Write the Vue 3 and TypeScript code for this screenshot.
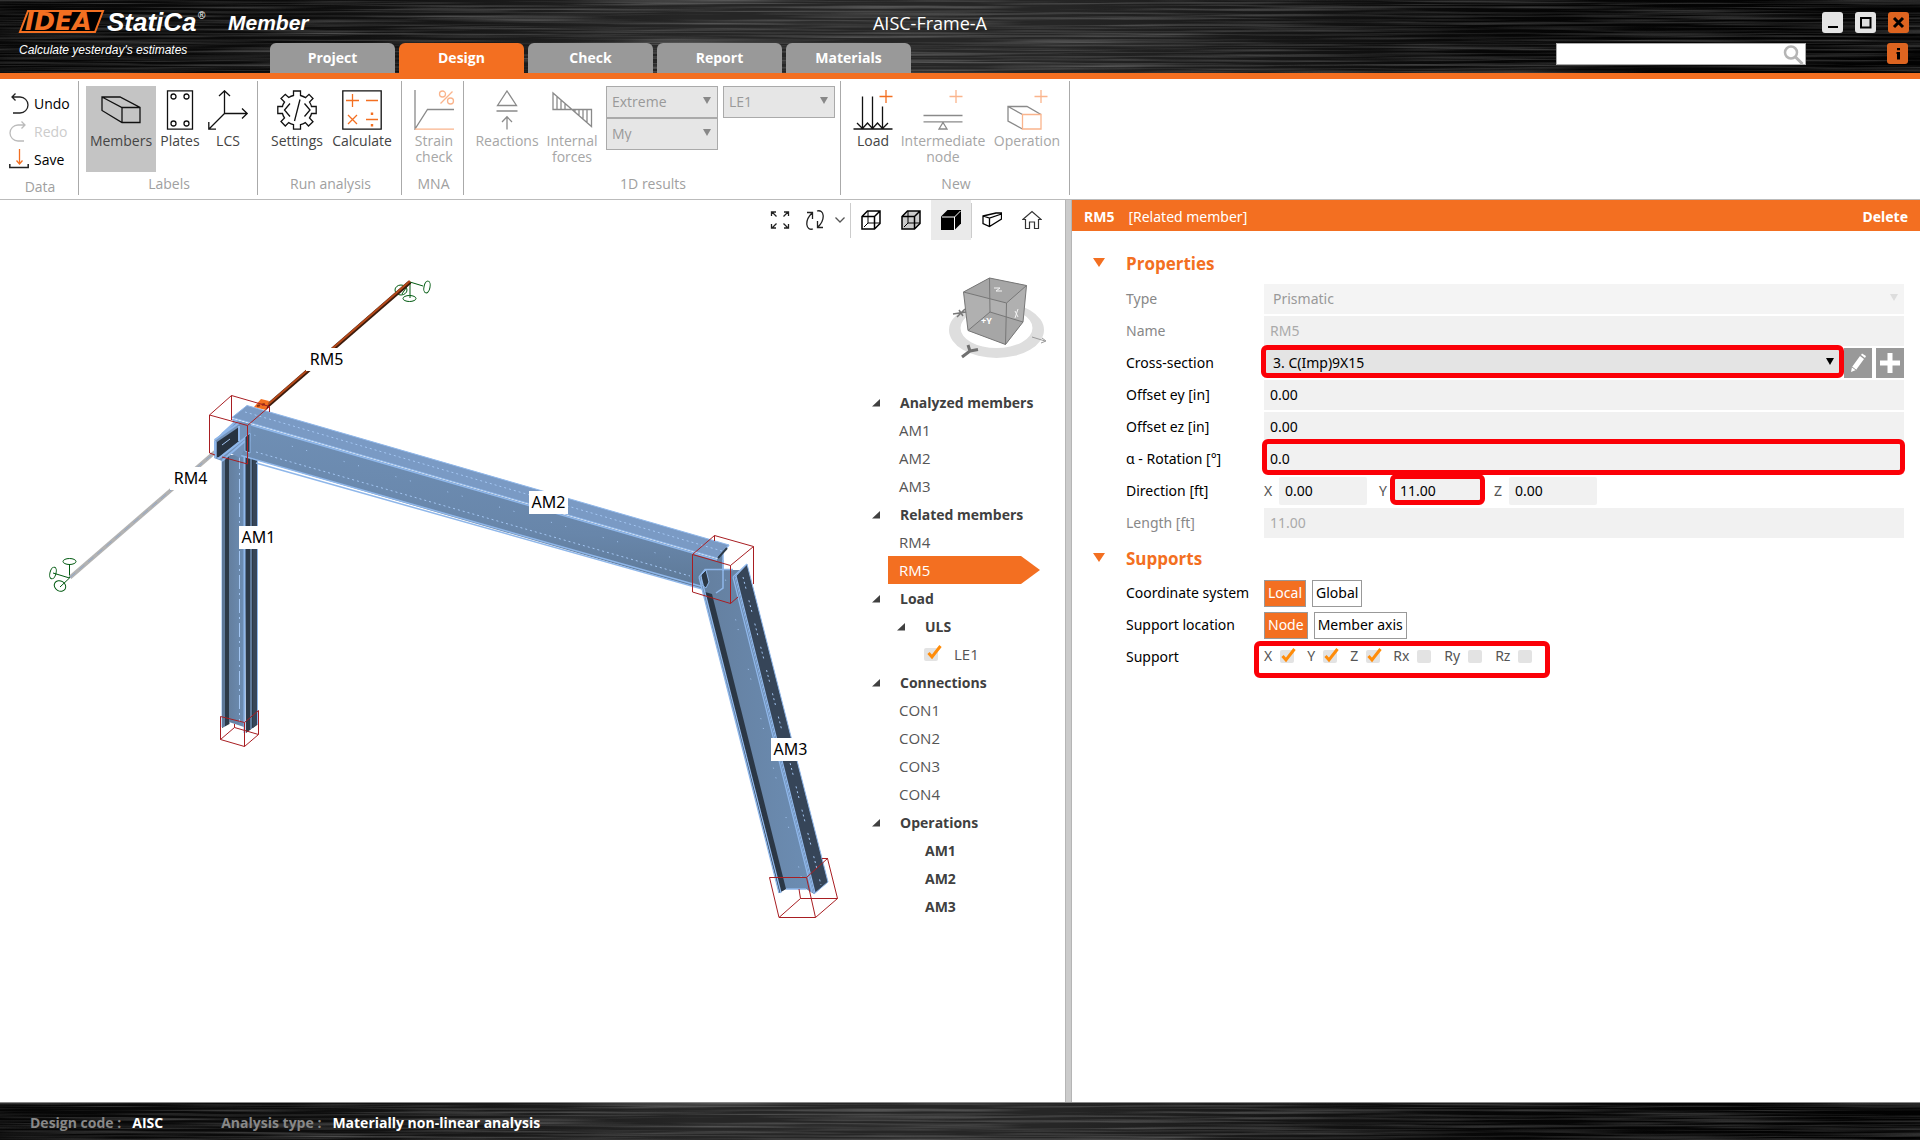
<script setup lang="ts">
import { ref } from 'vue'

interface Stroke { d: string; c?: string; f?: string; w?: number }
interface Tool { label: string; width: number; icon: Stroke[]; active?: boolean; disabled?: boolean }

const O = '#f36f21'
const OL = '#fab48c'
const G = '#8a8a8a'

const tabs = ['Project', 'Design', 'Check', 'Report', 'Materials']
const activeTab = ref('Design')

const labelTools: Tool[] = [
  { label: 'Members', width: 70, active: true, icon: [{ d: 'M1 7H19L39 17.5V32.5H21L1 20.5ZM1 7L21 17.5H39M21 17.5V32.5' }] },
  { label: 'Plates', width: 48, icon: [
    { d: 'M7.5 .8H32.5V39.2H7.5Z' },
    { d: 'M11 6.5a2.5 2.5 0 1 0 5 0a2.5 2.5 0 1 0-5 0M24 6.5a2.5 2.5 0 1 0 5 0a2.5 2.5 0 1 0-5 0M11 33.5a2.5 2.5 0 1 0 5 0a2.5 2.5 0 1 0-5 0M24 33.5a2.5 2.5 0 1 0 5 0a2.5 2.5 0 1 0-5 0' },
  ] },
  { label: 'LCS', width: 48, icon: [{ d: 'M16.5 23.5V1M11 6L16.5 .8L22 6M16.5 23.5H39M34 18.5L39.2 23.5L34 28.5M16.5 23.5L1 39M.8 32V39.2H8' }] },
]
const runTools: Tool[] = [
  { label: 'Settings', width: 66, icon: [
    { d: 'M16.5 1H23.5V5.5Q26.500 6.300 28.500 7.600L32 4.300L36 8.500L32.500 12Q34 14.500 34.500 16.500H39.200V23.500H34.500Q34 26 32.500 28L36 31.700L31.500 36L28.300 32.600Q26 34 23.500 34.600V39.200H16.500V34.600Q14 34 11.700 32.600L8.300 36L4 31.500L7.500 28Q6 26 5.500 23.500H.8V16.500H5.500Q6 14 7.500 12L4 8.500L8.300 4.300L11.700 7.500Q14 6 16.500 5.500Z' },
    { d: 'M13 13.500L7.500 20L13 26.500M27.500 13.500L33 20L27.500 26.500M23 9.500L17.500 31' },
  ] },
  { label: 'Calculate', width: 64, icon: [
    { d: 'M.8 .8H39.200V39.200H.8Z' },
    { d: 'M4 10.500H17M10.500 4V17M24 10.500H36M6 25L15 34M15 25L6 34M24 29.500H36', c: O },
    { d: 'M28.800 22.500H31.200V25H28.800ZM28.800 34H31.200V36.500H28.800Z', c: 'none', f: O },
  ] },
]
const mnaTools: Tool[] = [
  { label: 'Strain check', width: 48, disabled: true, icon: [
    { d: 'M1 0V39L13.500 19.500H40', c: G },
    { d: 'M1 39.200H40M38.500 1.500L26.500 13.500M25.500 4a3 3 0 1 0 6 0a3 3 0 1 0-6 0M33.500 11a3 3 0 1 0 6 0a3 3 0 1 0-6 0', c: OL },
  ] },
]
const resultTools: Tool[] = [
  { label: 'Reactions', width: 70, disabled: true, icon: [{ d: 'M20 1L29.500 15.500H10.500ZM9.500 21H30.500M20 39.500V27M15 32L20 26.800L25 32', c: G }] },
  { label: 'Internal forces', width: 60, disabled: true, icon: [{ d: 'M1 3V19.500H39.500V36.500ZM5 7V19.500M9 10.500V19.500M13 14V19.500M27 19.500V25.500M31 19.500V29M35 19.500V32.500M23 19.500V22', c: G }] },
]
const newTools: Tool[] = [
  { label: 'Load', width: 48, icon: [
    { d: 'M.5 39H39.500M9.500 6.500V38.500M19.500 6.500V38.500M29.500 16.500V38.500M4 33L9.500 38.500L14.500 33L19.500 38.500L24.500 33L29.500 38.500L35 33' },
    { d: 'M33 0V13M26.500 6.500H39.500', c: O },
  ] },
  { label: 'Intermediate node', width: 92, disabled: true, icon: [
    { d: 'M.5 25.500H39.500M.5 31.800H39.500M20 32.500L24 39H16Z', c: G },
    { d: 'M33 0V13M26.500 6.500H39.500', c: OL },
  ] },
  { label: 'Operation', width: 76, disabled: true, icon: [
    { d: 'M15.500 39L1 31V16.500H20L34 24.500M1 16.500L15.500 24.500', c: G },
    { d: 'M15.500 24.500H34V39H15.500ZM34 0V13M27.500 6.500H40.500', c: OL },
  ] },
]

interface Row { text: string; level: number; bold?: boolean; arrow?: boolean; check?: boolean; selected?: boolean }
const tree: Row[] = [
  { text: 'Analyzed members', level: 0, bold: true, arrow: true },
  { text: 'AM1', level: 0 },
  { text: 'AM2', level: 0 },
  { text: 'AM3', level: 0 },
  { text: 'Related members', level: 0, bold: true, arrow: true },
  { text: 'RM4', level: 0 },
  { text: 'RM5', level: 0, selected: true },
  { text: 'Load', level: 0, bold: true, arrow: true },
  { text: 'ULS', level: 1, bold: true, arrow: true },
  { text: 'LE1', level: 1, check: true },
  { text: 'Connections', level: 0, bold: true, arrow: true },
  { text: 'CON1', level: 0 },
  { text: 'CON2', level: 0 },
  { text: 'CON3', level: 0 },
  { text: 'CON4', level: 0 },
  { text: 'Operations', level: 0, bold: true, arrow: true },
  { text: 'AM1', level: 1, bold: true },
  { text: 'AM2', level: 1, bold: true },
  { text: 'AM3', level: 1, bold: true },
]

const form = ref({ name: 'RM5', ey: '0.00', ez: '0.00', alpha: '0.0', length: '11.00' })
const direction = ref([
  { axis: 'X', value: '0.00', marked: false },
  { axis: 'Y', value: '11.00', marked: true },
  { axis: 'Z', value: '0.00', marked: false },
])
const supports = ref([
  { axis: 'X', on: true },
  { axis: 'Y', on: true },
  { axis: 'Z', on: true },
  { axis: 'Rx', on: false },
  { axis: 'Ry', on: false },
  { axis: 'Rz', on: false },
])
const loadOn = ref(true)
const search = ref('')

const toolGroups: { caption: string; cls: string; tools: Tool[] }[] = [
  { caption: 'Labels', cls: 'g-labels', tools: labelTools },
  { caption: 'Run analysis', cls: 'g-run', tools: runTools },
  { caption: 'MNA', cls: 'g-mna', tools: mnaTools },
  { caption: '1D results', cls: 'g-results', tools: resultTools },
  { caption: 'New', cls: 'g-new', tools: newTools },
]

const memberLabels = [
  { t: 'RM5', x: 306, y: 348, w: 41 },
  { t: 'RM4', x: 170, y: 467, w: 41 },
  { t: 'AM1', x: 239, y: 526, w: 39 },
  { t: 'AM2', x: 529, y: 491, w: 39 },
  { t: 'AM3', x: 771, y: 738, w: 39 },
]
</script>

<template>
  <div class="app">
    <header class="top metal">
      <svg class="grain" aria-hidden="true">
        <filter id="brushed" x="0" y="0" width="100%" height="100%">
          <feTurbulence type="fractalNoise" baseFrequency="0.005 0.45" numOctaves="3" seed="4" />
          <feColorMatrix values="0 0 0 0 1  0 0 0 0 1  0 0 0 0 1  0.500 0 0 0 -0.200" />
        </filter>
        <rect width="100%" height="100%" filter="url(#brushed)" />
      </svg>
      <div class="brand">
        <svg class="logo" width="224" height="60" viewBox="0 0 224 60" role="img" aria-label="IDEA StatiCa">
          <path d="M28 11H103L95 32H20Z" fill="#000" stroke="#f36f21" stroke-width="2" />
          <text class="logo-idea" x="25" y="30">IDEA</text>
          <text class="logo-name" x="107" y="31">StatiCa</text>
          <text class="logo-reg" x="198" y="19">®</text>
          <text class="logo-tag" x="19" y="54">Calculate yesterday's estimates</text>
        </svg>
      </div>
      <div class="middle">
        <div class="title-row">
          <span class="product">Member</span>
          <h1>AISC-Frame-A</h1>
        </div>
        <nav class="tabs">
          <button v-for="t in tabs" :key="t" :class="{ on: t === activeTab }" @click="activeTab = t">{{ t }}</button>
        </nav>
      </div>
      <div class="right">
        <div class="win">
          <button aria-label="Minimize"><svg width="21" height="21"><path d="M6 15H16" stroke="#000" stroke-width="2" /></svg></button>
          <button aria-label="Maximize"><svg width="21" height="21"><path d="M6 6H15.500V15.500H6Z" stroke="#000" stroke-width="2" fill="#ddd" /></svg></button>
          <button class="close" aria-label="Close"><svg width="21" height="21"><path d="M6 6L15 15M15 6L6 15" stroke="#000" stroke-width="3" /></svg></button>
        </div>
        <div class="find">
          <label class="search">
            <input v-model="search" type="text" aria-label="Search" />
            <svg width="22" height="22"><circle cx="8" cy="8.500" r="6" fill="none" stroke="#b5b5b5" stroke-width="2.500" /><path d="M12.500 13L19.500 20" stroke="#b5b5b5" stroke-width="3" /></svg>
          </label>
          <button class="info" aria-label="Information"><svg width="21" height="21"><path d="M10 5H13V7.200H10ZM9.500 9H13V16.500H10V11H9.500Z" fill="#000" /></svg></button>
        </div>
      </div>
    </header>

    <div class="ribbon">
      <section class="group g-data">
        <div class="quick">
          <button><svg width="20" height="22" fill="none" stroke="#222" stroke-width="1.300"><path d="M3 4H11a8 8 0 0 1 0 16H4M6.500 .5L3 4L6.500 7.500" /></svg>Undo</button>
          <button disabled><svg width="20" height="22" fill="none" stroke="#bbb" stroke-width="1.300"><path d="M16 4H9a8 8 0 0 0 0 16H15M12.500 .5L16 4L12.500 7.500" /></svg>Redo</button>
          <button><svg width="20" height="22" fill="none"><path d="M10.500 0V15M7.500 11.500L10.500 15L13.500 11.500" stroke="#f36f21" stroke-width="1.300" /><path d="M.8 15V18.500H19.200V15" stroke="#222" stroke-width="1.500" /></svg>Save</button>
        </div>
        <h2>Data</h2>
      </section>
      <section v-for="g in toolGroups" :key="g.caption" class="group" :class="g.cls">
        <div class="tools">
          <button v-for="t in g.tools" :key="t.label" class="tool" :class="{ active: t.active }" :disabled="t.disabled" :style="{ width: t.width + 'px' }">
            <svg width="42" height="40" viewBox="-1 0 42 40" fill="none" stroke-width="1.300">
              <path v-for="(s, i) in t.icon" :key="i" :d="s.d" :stroke="s.c || '#111'" :fill="s.f || 'none'" />
            </svg>
            <span>{{ t.label }}</span>
          </button>
          <div v-if="g.cls === 'g-results'" class="combos">
            <div class="combo"><select disabled aria-label="Extreme"><option>Extreme</option></select><i /></div>
            <div class="combo"><select disabled aria-label="Load effect"><option>LE1</option></select><i /></div>
            <div class="combo"><select disabled aria-label="Component"><option>My</option></select><i /></div>
          </div>
        </div>
        <h2>{{ g.caption }}</h2>
      </section>
    </div>

    <main class="work">
      <section class="viewport">
        <svg class="scene" viewBox="0 200 1065 902" preserveAspectRatio="xMinYMin meet">
          <defs>
            <linearGradient id="web" x1="0" y1="0" x2="-0.080" y2="1"><stop offset="0" stop-color="#6f8fb5" /><stop offset=".6" stop-color="#6886aa" /><stop offset="1" stop-color="#5a7490" /></linearGradient>
            <linearGradient id="col" x1="0" x2="1"><stop offset="0" stop-color="#647f9f" /><stop offset="1" stop-color="#6c8db3" /></linearGradient>
          </defs>

          <g fill="none" stroke="#005a10">
            <path d="M410 282V298M410 282L423 286M410 282L402 294" />
            <ellipse cx="409.500" cy="298.500" rx="6.500" ry="3" /><ellipse cx="427" cy="287" rx="3" ry="6" transform="rotate(12 427 287)" /><ellipse cx="401" cy="290" rx="6" ry="5" />
            <path d="M69.500 578V564M69.500 578L53 573M69.500 578L60 587" />
            <ellipse cx="69.500" cy="561.500" rx="6.500" ry="3" /><ellipse cx="53" cy="573" rx="3" ry="6" transform="rotate(15 53 573)" /><ellipse cx="60" cy="586" rx="6" ry="5" transform="rotate(30 60 586)" />
          </g>
          <path d="M70 577.500L215 452" stroke="#b3b3b3" stroke-width="4" />
          <path d="M70 577.500L215 452" stroke="#8fa6c8" stroke-dasharray="7 5" />
          <path d="M265 408L410 282" stroke="#3c1b0c" stroke-width="4" />
          <path d="M265 407L410 281" stroke="#b5491a" stroke-width="2" />

          <path d="M222 455H229.500V724L222 728ZM244 455H258V724L246 733Z" fill="#2d3a48" />
          <path d="M229 455H244V727L229 722Z" fill="url(#col)" />
          <path d="M253 455H257V725L253 728Z" fill="#364558" />
          <path d="M222 455V727M224 455V727" stroke="#8fb7ea" />
          <path d="M244.500 430V733" stroke="#8fb7ea" stroke-width="2" />
          <path d="M251 455V729M257.500 460V724" stroke="#8fb7ea" />
          <path d="M239.500 455V722" stroke="#a3c6f3" stroke-dasharray="14 4 2 4" />

          <path d="M233 419L717 559L723 552V588L716 593L232 453Z" fill="url(#web)" />
          <path d="M247 405.500L232 417.500L717 558L729 545Z" fill="#7a9ac4" stroke="#8fb7ea" />
          <path d="M232 419.500L717 560M232 453L716 590.500M256 463L716 593L723 588V552M717 558L729 545" fill="none" stroke="#8fb7ea" stroke-width="1.500" />
          <path d="M245 412L722 551M256 452L690 576" stroke="#a3c6f3" stroke-dasharray="2 3" />
          <path d="M240 431L690 563" stroke="#a3c6f3" stroke-dasharray="1 14 1 38" />
          <path d="M718 558L727 548" stroke="#2d3a48" stroke-width="2" />

          <path d="M222 433L238 421L251 424V441L246 446L240 458L230 453L222 461L214 458V441Z" fill="#7393bb" />
          <path d="M217 442L239 427V441L219 457H217Z" fill="#27323f" />
          <path d="M214.500 440L239 423M215 441V458M218 459L250 434M222 461L245 441M222 434L236 421M239 426V441" stroke="#8fb7ea" stroke-width="2" fill="none" />
          <path d="M222 445L230 439" stroke="#a3c6f3" />
          <path d="M245 437L250 433V453L245 451Z" fill="#2d3a48" stroke="#8fb7ea" />
          <path d="M254 407L261 399L269 401L266 410Z" fill="#f36f21" /><path d="M257 406L265 404" stroke="#8a3410" stroke-width="2" stroke-dasharray="3 2" />

          <path d="M699 577L705 570L740 570L814 894L806 889H786L779 893Z" fill="url(#col)" />
          <path d="M705 592L712 594L786 889L779 893Z" fill="#2b3745" />
          <path d="M701 575L706 570L709 582L706 588L702 585Z" fill="#2b3745" stroke="#8fb7ea" />
          <path d="M735 577L747 564L828 882L814 894Z" fill="#364558" stroke="#8fb7ea" />
          <path d="M733 577L812 892M736 576L815 893M699 577L779 893M701 577L781 893M699 577L705 569.500H733M786 889H806M733 577L747 564" stroke="#8fb7ea" stroke-width="1.300" fill="none" />
          <path d="M743 577L821 885" stroke="#a3c6f3" stroke-dasharray="2 3 2 3 2 12" />
          <path d="M723 570L803 884" stroke="#a3c6f3" stroke-dasharray="1 9 1 40" />
          <path d="M723 560V588L716 593" stroke="#8fb7ea" stroke-width="1.500" fill="none" />

          <g fill="none" stroke="#a81e22">
            <path d="M209.500 415L231.500 395.500L269.500 406.500L247.500 425.500ZM209.500 415V453L215 455M247.500 425.500V464L222 457M231.500 395.500V420M269.500 406.500V412" />
            <path d="M220.500 716.500L244.500 722.500L258.500 710.500V734.500L244.500 746.500L220.500 739.500ZM244.500 722.500V746.500M220.500 739.500L234.500 727.500L258.500 734.500M234.500 724V727.500" />
            <path d="M692.500 554.500L714.500 535.500L753.500 546.500L730.500 565.500ZM692.500 554.500V592L730.500 603.500V565.500M753.500 546.500V584M730.500 603.500L738 597M714.500 535.500V541" />
            <path d="M769.500 877.500H806.500L827.500 858.500L837.500 898.500L815.500 917.500H779ZM806.500 877.500L815.500 917.500M779 917.500L800.500 898.500H837.500M800.500 898.500L799 889M822 858.500H828" />
          </g>

          <g class="labels">
            <g v-for="l in memberLabels" :key="l.t">
              <rect :x="l.x" :y="l.y" :width="l.w" height="23" fill="#fff" />
              <text :x="l.x + l.w / 2" :y="l.y + 17" text-anchor="middle">{{ l.t }}</text>
            </g>
          </g>

          <g class="cube">
            <path fill-rule="evenodd" fill="#dedede" d="M949 330a47.500 28 0 1 0 95 0a47.500 28 0 1 0-95 0M960.500 328a36 20 0 1 0 72 0a36 20 0 1 0-72 0" />
            <path d="M963.500 292L989.500 278L1026.500 285.500L1023 322L1005.500 344.500L968 330.500Z" fill="#b0b0b0" />
            <path d="M963.500 292L989.500 278L1026.500 285.500L1006.500 303ZM968 330.500L1005.500 344.500L1023 322L990 312Z" fill="#a6a6a6" />
            <path d="M963.500 292L989.500 278L1026.500 285.500L1023 322L1005.500 344.500L968 330.500ZM963.500 292L1006.500 303L1026.500 285.500M1006.500 303L1005.500 344.500M989.500 278L990 312L968 330.500M990 312L1023 322" fill="none" stroke="#777" />
            <path d="M1032 337L1045 341M1042 338L1046 341L1041 343" fill="none" stroke="#999" />
            <path d="M953 314L966 312M957 317L965 309M959 310L963 316" stroke="#777" stroke-width="1.500" />
            <path d="M962 357L970 351M968 345L970 351L978 349.500" fill="none" stroke="#707070" stroke-width="3" />
            <path d="M994 288H1000L996 291H1002M1015 311L1018 317M1018 309L1015 318" fill="none" stroke="#f4f4f4" />
            <text x="981" y="324">+Y</text>
          </g>
        </svg>

        <div class="viewbar">
          <button aria-label="Zoom all"><svg width="20" height="20" fill="none" stroke="#222" stroke-width="1.300"><path d="M1.500 6V2H6M2 2L6.500 6.500M14 2H18.500V6M18 2L13.500 6.500M1.500 14V18H6M2 18L6.500 13.500M14 18H18.500V14M18 18L13.500 13.500" /></svg></button>
          <button class="narrow" aria-label="Rotate"><svg width="22" height="20" fill="none" stroke="#222" stroke-width="1.300"><path d="M9 19C2 21 0 11 8 3M3 2.500H8.500V9M13 1C20 -1 22 9 14 17M13.500 11V17.500H19" /></svg></button>
          <button class="slim" aria-label="Rotate options"><svg width="10" height="6" fill="none" stroke="#555" stroke-width="1.300"><path d="M.5 .5L5 5L9.500 .5" /></svg></button>
          <span class="sep" />
          <button aria-label="Wireframe"><svg width="20" height="20" fill="none" stroke="#000" stroke-width="1.500"><path d="M1 6.500L6.500 1H19V13.500L13.500 19H1ZM1 6.500H13.500V19M13.500 6.500L19 1" /><path d="M7 1V13H19M7 13L3 17" stroke-width="1" /></svg></button>
          <button aria-label="Shaded"><svg width="20" height="20" fill="#ccc" stroke="#000" stroke-width="1.500"><path d="M1 6.500L6.500 1H19V13.500L13.500 19H1ZM1 6.500H13.500V19M13.500 6.500L19 1" /><path d="M7 1V13H19M7 13L3 17" stroke-width="1" fill="none" /></svg></button>
          <button class="on" aria-label="Solid"><svg width="20" height="20"><path d="M0 6.500L6.500 0H20V13.500L13.500 20H0Z" fill="#000" /><path d="M1 7H13.500V20M13.500 7L19.500 1" fill="none" stroke="#fff" /></svg></button>
          <span class="sep" />
          <button aria-label="Section view"><svg width="20" height="16" fill="none" stroke="#000" stroke-width="1.300"><path d="M1 4L14 1H19.500V7L7.500 14.500L1 11.500ZM1 4L7.500 6L19.500 2M7.500 6V14.500" /></svg></button>
          <button aria-label="Home view"><svg width="20" height="20" fill="none" stroke="#333" stroke-width="1.200"><path d="M.8 9.500L10 1.500L19.200 9.500H16.500V18.500H12.500V12H7.500V18.500H3.500V9.500Z" /></svg></button>
        </div>

        <ul class="tree">
          <li v-for="(r, i) in tree" :key="i" :class="{ bold: r.bold, sel: r.selected, child: r.level === 1 }">
            <span class="twist"><svg v-if="r.arrow" width="8" height="8"><path d="M8 0V7.500H0Z" fill="#404040" /></svg></span>
            <label v-if="r.check" class="tick"><input v-model="loadOn" type="checkbox" /><svg viewBox="0 0 18 16" width="18" height="16"><path d="M3.500 9L7 13L15.500 2" fill="none" stroke="#ff8c0a" stroke-width="3" /></svg><span class="tick-text">{{ r.text }}</span></label>
            <span v-else>{{ r.text }}</span>
          </li>
        </ul>
      </section>

      <div class="splitter" />

      <aside class="panel">
        <div class="panel-head">
          <strong>RM5</strong><span>[Related member]</span><button>Delete</button>
        </div>
        <div class="panel-body">
          <h3><svg width="12" height="9"><path d="M0 0H12L6 9Z" fill="#f36f21" /></svg>Properties</h3>
          <div class="field muted">
            <label for="type">Type</label>
            <div class="ctl pick pale"><select id="type" disabled><option>Prismatic</option></select><i /></div>
          </div>
          <div class="field muted"><label for="name">Name</label><div class="ctl"><input id="name" v-model="form.name" disabled /></div></div>
          <div class="field">
            <label for="cs">Cross-section</label>
            <div class="ctl pick ring ring-cs"><select id="cs"><option>3. C(Imp)9X15</option></select><i /></div>
            <button class="sq" aria-label="Edit"><svg width="16" height="20" fill="#fff"><path d="M2 14L10 3L14 6L6 17L1 19ZM11 2L12 .5L16 3L15 5Z" /><path d="M2 14L6 17" stroke="#999" /></svg></button>
            <button class="sq" aria-label="Add"><svg width="20" height="20"><path d="M10 0V20M0 10H20" stroke="#fff" stroke-width="5" /></svg></button>
          </div>
          <div class="field"><label for="ey">Offset ey [in]</label><div class="ctl"><input id="ey" v-model="form.ey" /></div></div>
          <div class="field"><label for="ez">Offset ez [in]</label><div class="ctl"><input id="ez" v-model="form.ez" /></div></div>
          <div class="field"><label for="alpha">α - Rotation [°]</label><div class="ctl ring ring-rot"><input id="alpha" v-model="form.alpha" /></div></div>
          <div class="field">
            <span class="cap">Direction [ft]</span>
            <div class="dirs">
              <label v-for="d in direction" :key="d.axis"><span>{{ d.axis }}</span><span class="short" :class="{ ring: d.marked, 'ring-dir': d.marked }"><input v-model="d.value" /></span></label>
            </div>
          </div>
          <div class="field muted"><label for="len">Length [ft]</label><div class="ctl"><input id="len" v-model="form.length" disabled /></div></div>

          <h3 class="second"><svg width="12" height="9"><path d="M0 0H12L6 9Z" fill="#f36f21" /></svg>Supports</h3>
          <div class="field"><span class="cap">Coordinate system</span><div class="seg"><button class="on">Local</button><button>Global</button></div></div>
          <div class="field"><span class="cap">Support location</span><div class="seg"><button class="on">Node</button><button>Member axis</button></div></div>
          <div class="field">
            <span class="cap">Support</span>
            <div class="checks ring ring-sup">
              <label v-for="s in supports" :key="s.axis" class="tick"><span>{{ s.axis }}</span><input v-model="s.on" type="checkbox" /><svg v-if="s.on" viewBox="0 0 18 16" width="18" height="16"><path d="M3.500 9L7 13L15.500 2" fill="none" stroke="#ff8c0a" stroke-width="3" /></svg></label>
            </div>
          </div>
        </div>
      </aside>
    </main>

    <footer class="status metal">
      <svg class="grain" aria-hidden="true"><rect width="100%" height="100%" filter="url(#brushed)" /></svg>
      <span class="k">Design code :</span><span class="v">AISC</span>
      <span class="k next">Analysis type :</span><span class="v">Materially non-linear analysis</span>
    </footer>
  </div>
</template>

<style>
body { margin: 0; background: #fff; }
</style>

<style scoped>
.app { display: flex; flex-direction: column; min-height: 100vh; font-family: "Open Sans", "Noto Sans", sans-serif; font-size: 15px; line-height: 20px; color: #444; }
.app * { box-sizing: border-box; }
button, input, select { font: inherit; color: inherit; margin: 0; padding: 0; border: 0; background: none; border-radius: 0; }
select { appearance: none; opacity: 1; }
h1, h2, h3, ul { margin: 0; padding: 0; font-weight: 400; list-style: none; }

.metal { position: relative; background: linear-gradient(90deg, #050505 0%, #0c0c0c 15%, #262626 36%, #262626 55%, #060606 78%, #020202 100%); }
.metal > * { position: relative; }
.metal > .grain { position: absolute; inset: 0; width: 100%; height: 100%; }

.top { display: flex; height: 79px; border-bottom: 6px solid #f36f21; color: #fff; }
.brand { width: 224px; overflow: hidden; }
.logo { display: block; font-family: "Liberation Sans", Arial, sans-serif; font-style: italic; fill: #fff; }
.logo-idea { font-size: 25px; font-weight: 700; fill: #f36f21; font-family: "DejaVu Sans", sans-serif; }
.logo-name { font-size: 26px; font-weight: 700; }
.logo-reg { font-size: 10px; font-style: normal; }
.logo-tag { font-size: 12px; }
.middle { flex: 1; display: flex; flex-direction: column; }
.title-row { display: flex; height: 43px; align-items: center; padding-top: 2px; }
.product { width: 80px; padding-left: 4px; font: italic 700 21px/24px "Liberation Sans", Arial, sans-serif; }
h1 { flex: 1; text-align: center; font-size: 18px; line-height: 24px; }
.tabs { display: flex; gap: 4px; padding-left: 46px; }
.tabs button { width: 125px; height: 30px; border-radius: 6px 6px 0 0; background: #999; color: #fff; font-weight: 700; font-size: 14px; }
.tabs button.on { background: #f36f21; }
.right { width: 364px; }
.win { display: flex; justify-content: flex-end; gap: 12px; padding: 12px 11px 10px 0; }
.win button, .info { width: 21px; height: 21px; border-radius: 3px; background: #e4e4e4; }
.win .close, .info { background: #dd6420; }
.win svg, .info svg { display: block; fill: none; }
.find { display: flex; justify-content: space-between; padding-right: 12px; }
.search { display: flex; width: 250px; height: 22px; background: #fff; border: 1px solid #aaa; }
.search input { flex: 1; min-width: 0; color: #222; }

.ribbon { display: flex; height: 121px; border-bottom: 1px solid #bbb; }
.group { display: flex; flex-direction: column; justify-content: space-between; margin: 2px 0 4px; border-right: 1px solid #aaa; font-size: 14px; line-height: 16px; }
.group h2 { text-align: center; font-size: 14px; line-height: 20px; color: #a0a0a0; padding: 0 0 1px 2px; }
.g-data { width: 79px; }
.group.g-data h2 { padding-bottom: 0; margin-bottom: -2px; }
.g-labels { width: 179px; }
.g-run { width: 144px; }
.g-mna { width: 62px; }
.g-results { width: 377px; }
.g-new { width: 229px; }
.quick { display: flex; flex-direction: column; padding: 10px 0 0 9px; gap: 2px; }
.quick button { display: flex; align-items: center; gap: 5px; height: 26px; color: #000; }
.quick button:disabled { color: #ccc; }
.tools { display: flex; padding-top: 5px; }
.g-labels .tools { padding-left: 7px; }
.g-run .tools { padding-left: 6px; }
.g-mna .tools { padding-left: 8px; }
.g-results .tools { padding-left: 8px; }
.g-new .tools { padding-left: 8px; }
.tool { display: flex; flex-direction: column; align-items: center; gap: 3px; height: 86px; padding-top: 4px; color: #444; line-height: 16px; }
.tool svg { flex: none; }
.tool.active { background: #c4c4c4; }
.tool:disabled { color: #a6a6a6; }
.combos { display: grid; grid-template-columns: 112px 112px; grid-auto-rows: 32px; column-gap: 5px; align-self: flex-start; padding-left: 4px; }
.combo { position: relative; display: flex; background: #e6e6e6; border: 1px solid #aaa; }
.combo select { flex: 1; padding-left: 5px; color: #999; }
i { position: absolute; right: 6px; top: 50%; margin-top: -5px; border: 4px solid transparent; border-top: 7px solid #888; border-bottom: 0; }

.work { flex: 1; display: flex; }
.viewport { position: relative; flex: 1065 1 0; min-width: 0; }
.scene { position: absolute; left: 0; top: 0; width: 100%; height: 100%; }
.labels text { font-size: 16px; fill: #000; font-family: "Noto Sans", sans-serif; }
.cube text { font-size: 9px; font-weight: 700; fill: #fff; }
.viewbar { position: relative; display: flex; justify-content: flex-end; align-items: center; height: 40px; padding-right: 13px; }
.viewbar button { display: flex; align-items: center; justify-content: center; width: 40px; height: 40px; }
.viewbar .narrow { width: 30px; }
.viewbar .slim { width: 20px; }
.viewbar .on { background: #eaeaea; }
.sep { width: 1px; height: 35px; background: #ccc; }
.tree { position: relative; width: 193px; margin: 148px 0 0 auto; }
.tree li { display: flex; align-items: center; height: 28px; font-size: 15px; color: #555; }
.tree .bold { padding-top: 2px; font-weight: 700; font-size: 14px; color: #404040; }
.tree .child { padding-left: 25px; }
.twist { display: flex; width: 27px; flex: none; }
.bold .twist { width: 28px; }
.tree .sel { height: 28px; margin-left: 16px; margin-right: 25px; background: #f36f21; color: #fff; clip-path: polygon(0 0, 133px 0, 100% 50%, 133px 100%, 0 100%); }
.sel .twist { width: 11px; }
.tick { display: flex; align-items: center; position: relative; }
.tick input { appearance: none; width: 14px; height: 13px; border-radius: 2px; background: #e3e3e3; }
.tick svg { position: absolute; right: -3px; top: 0; }
.tree .tick svg { right: auto; left: 1px; }
.tick-text { margin-left: 16px; }

.splitter { width: 7px; background: #cbcbcb; border-left: 1px solid #b5b5b5; border-right: 1px solid #b5b5b5; }
.panel { flex: 848 1 0; min-width: 0; font-family: "Noto Sans", "Open Sans", sans-serif; }
.panel-head { display: flex; align-items: center; height: 31px; padding: 2px 12px 0; background: #f36f21; color: #fff; font-size: 14px; }
.panel-head span { flex: 1; padding-left: 14px; }
.panel-head button { font-weight: 700; }
.panel-body { padding: 20px 16px 0 21px; color: #000; font-size: 14px; }
h3 { display: flex; align-items: center; gap: 21px; height: 26px; margin-bottom: 6px; color: #f36f21; font-family: "Open Sans", sans-serif; font-size: 17px; font-weight: 700; line-height: 26px; }
h3 svg { margin-bottom: 3px; }
h3.second { margin: 7px 0 5px; }
.field { display: flex; align-items: center; min-height: 32px; padding-left: 33px; }
.field > label, .cap { width: 138px; flex: none; }
.muted { color: #888; }
.ctl { position: relative; flex: 1; height: 30px; display: flex; background: #f1f1f1; }
.ctl input, .ctl select { flex: 1; min-width: 0; padding-left: 6px; }
.ctl.pick select { padding-left: 9px; }
.pick { background: #e4e4e4; }
.pick i { border-top-color: #000; }
.pale { background: #f4f4f4; color: #999; }
.pale i { border-top-color: #ddd; }
.muted input { color: #aaa; }
.sq { display: flex; align-items: center; justify-content: center; width: 28px; height: 30px; margin-left: 4px; background: #999; }
.ring { position: relative; }
.ring::after { content: ""; position: absolute; border: 5px solid #fb0007; border-radius: 6px; pointer-events: none; z-index: 1; }
.ring-cs::after { inset: -3px -4px 0 -3px; }
.ring-rot::after { inset: -5px -1px -1px -2px; }
.ring-dir::after { inset: -3px -3px 0 -4px; }
.ring-sup::after { inset: -1px -18px -5px -10px; }
.dirs { display: flex; gap: 12px; }
.dirs label { display: flex; align-items: center; color: #555; }
.dirs label > span:first-child { width: 15px; }
.short { width: 88px; height: 28px; display: flex; background: #f1f1f1; border-radius: 2px; color: #000; }
.short input { width: 100%; padding-left: 6px; }
.seg { display: flex; gap: 6px; }
.seg button { height: 27px; padding: 0 3px; border: 1px solid #999; }
.seg .on { background: #f36f21; color: #fff; }
.checks { display: flex; gap: 13px; height: 31px; padding-bottom: 2px; color: #555; }
.checks .tick { gap: 8px; }
.checks .tick svg { top: 5px; }

.status { display: flex; align-items: center; height: 38px; padding: 2px 30px 0; border-top: 1px solid #888; font-weight: 700; font-size: 14px; color: #fff; }
.status .k { color: #888; margin-right: 11px; }
.status .next { margin-left: 58px; }
</style>
